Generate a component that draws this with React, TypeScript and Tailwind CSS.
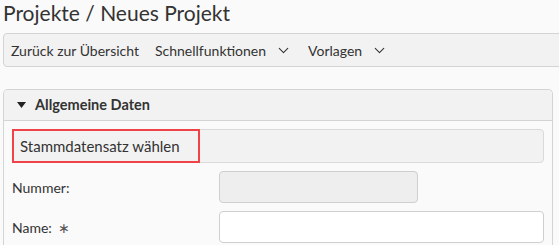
import { ChevronDown } from "lucide-react";

const font = { fontFamily: "Lato, 'Noto Sans', sans-serif" };

function MenuItem({ label, dropdown }: { label: string; dropdown?: boolean }) {
  return (
    <button className="flex items-center gap-[9px] text-[14px] text-[#333]">
      {label}
      {dropdown && <ChevronDown size={17} strokeWidth={1.5} className="text-[#333]" />}
    </button>
  );
}

export default function App() {
  return (
    <div
      className="min-h-screen overflow-hidden bg-[#fafafa] pl-[3px] pr-[6px] text-[#333]"
      style={font}
    >
      {/* Titel */}
      <h1 className="h-[25px] text-[21px] leading-[25px] text-[#333]">
        Projekte / Neues Projekt
      </h1>

      {/* Toolbar */}
      <div className="mt-[8px] -mr-[20px] flex h-[34px] items-center gap-[16px] rounded-[4px] border border-[#d4d4d4] bg-[#f2f2f2] pl-[7px]">
        <MenuItem label="Zurück zur Übersicht" />
        <MenuItem label="Schnellfunktionen" dropdown />
        <MenuItem label="Vorlagen" dropdown />
      </div>

      {/* Panel */}
      <div className="mt-[22px] rounded-t-[5px] border border-b-0 border-[#d4d4d4] bg-[#fafafa]">
        <div className="flex h-[31px] items-center gap-[9px] rounded-t-[5px] border-b border-[#d4d4d4] bg-[#f2f2f2] pl-[13px]">
          <svg width="9" height="6" viewBox="0 0 9 6">
            <path d="M0 0h9L4.5 6z" fill="#222" />
          </svg>
          <span className="text-[14.5px] font-bold text-[#333]">Allgemeine Daten</span>
        </div>

        <div className="flex flex-col gap-[8px] px-[8px] pt-[8px] pb-[10px]">
          <div className="relative flex h-[34px] items-center rounded-[4px] border border-[#d9d9d9] bg-[#f2f2f2] pl-[7px] text-[15px]">
            <span className="absolute -left-[1px] -top-[1px] h-[34px] w-[188px] border-2 border-[#ef4249]" />
            Stammdatensatz wählen
          </div>

          <div className="flex h-[32px] items-center">
            <span className="w-[207px] text-[14px]">Nummer:</span>
            <div className="h-[32px] w-[199px] rounded-[4px] border border-[#cfcfcf] bg-[#eeeeee]" />
          </div>

          <div className="flex h-[32px] items-center">
            <span className="w-[207px] text-[14px]">
              Name: <span className="ml-[3px] text-[#555]">∗</span>
            </span>
            <div className="h-[32px] flex-1 rounded-[4px] border border-[#cfcfcf] bg-white" />
          </div>
        </div>
      </div>
    </div>
  );
}
